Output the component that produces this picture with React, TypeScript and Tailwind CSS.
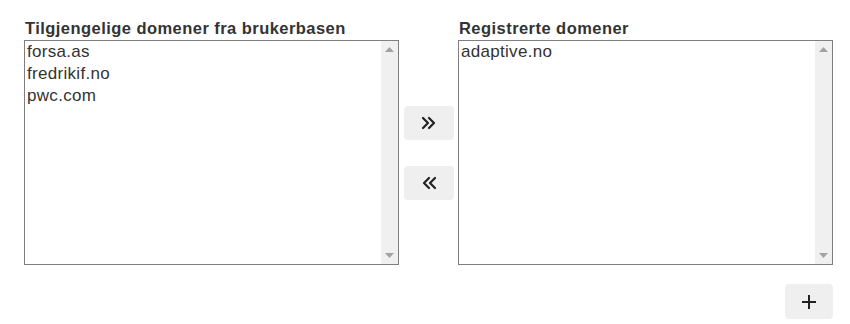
import React from "react";

function ListBox({ items }: { items: string[] }) {
  return (
    <div className="flex h-[225px] w-[375px] border border-[#7f7f7f] bg-white">
      <div className="flex-1 pl-[2px] pt-0">
        {items.map((it) => (
          <div key={it} className="text-[17px] leading-[22px] tracking-[0.3px] text-[#333]">
            {it}
          </div>
        ))}
      </div>
      <div className="flex w-[17px] flex-col justify-between bg-[#f0f0f0]">
        <div className="flex h-[17px] items-center justify-center">
          <svg width="9" height="5" viewBox="0 0 9 5">
            <polygon points="0,5 9,5 4.5,0" fill="#a3a3a3" />
          </svg>
        </div>
        <div className="flex h-[17px] items-center justify-center">
          <svg width="9" height="5" viewBox="0 0 9 5">
            <polygon points="0,0 9,0 4.5,5" fill="#a3a3a3" />
          </svg>
        </div>
      </div>
    </div>
  );
}

function Chevrons({ dir }: { dir: "right" | "left" }) {
  return (
    <svg width="16" height="14" viewBox="0 0 16 14" fill="none" stroke="#222" strokeWidth="2.2" strokeLinecap="round" strokeLinejoin="round">
      {dir === "right" ? (
        <>
          <polyline points="2,2 7,7 2,12" />
          <polyline points="8,2 13,7 8,12" />
        </>
      ) : (
        <>
          <polyline points="8,2 3,7 8,12" />
          <polyline points="14,2 9,7 14,12" />
        </>
      )}
    </svg>
  );
}

export default function App() {
  return (
    <div
      className="h-[324px] w-[850px] bg-white pl-[24px] pt-[16px] text-[#333]"
      style={{ fontFamily: '"Liberation Sans", Arial, sans-serif' }}
    >
      <div className="flex">
        <div className="flex flex-col">
          <div className="h-[24px] pl-[1px] pt-[1px] text-[16.5px] font-bold leading-[22px] tracking-[0.45px]">
            Tilgjengelige domener fra brukerbasen
          </div>
          <ListBox items={["forsa.as", "fredrikif.no", "pwc.com"]} />
        </div>
        <div className="flex w-[59px] flex-col items-center justify-center gap-[26px] pt-[24px] pl-[1px]">
          <button className="flex h-[34px] w-[50px] items-center justify-center rounded-[4px] bg-[#efefef]">
            <Chevrons dir="right" />
          </button>
          <button className="flex h-[34px] w-[50px] items-center justify-center rounded-[4px] bg-[#efefef]">
            <Chevrons dir="left" />
          </button>
        </div>
        <div className="flex flex-col">
          <div className="h-[24px] pl-[1px] pt-[1px] text-[16.5px] font-bold leading-[22px] tracking-[0.45px]">
            Registrerte domener
          </div>
          <ListBox items={["adaptive.no"]} />
        </div>
      </div>
      <div className="mt-[19px] flex w-[809px] justify-end">
        <button className="flex h-[35px] w-[48px] items-center justify-center rounded-[4px] bg-[#efefef]">
          <svg width="16" height="16" viewBox="0 0 16 16" stroke="#222" strokeWidth="2">
            <line x1="8" y1="1" x2="8" y2="15" />
            <line x1="1" y1="8" x2="15" y2="8" />
          </svg>
        </button>
      </div>
    </div>
  );
}
